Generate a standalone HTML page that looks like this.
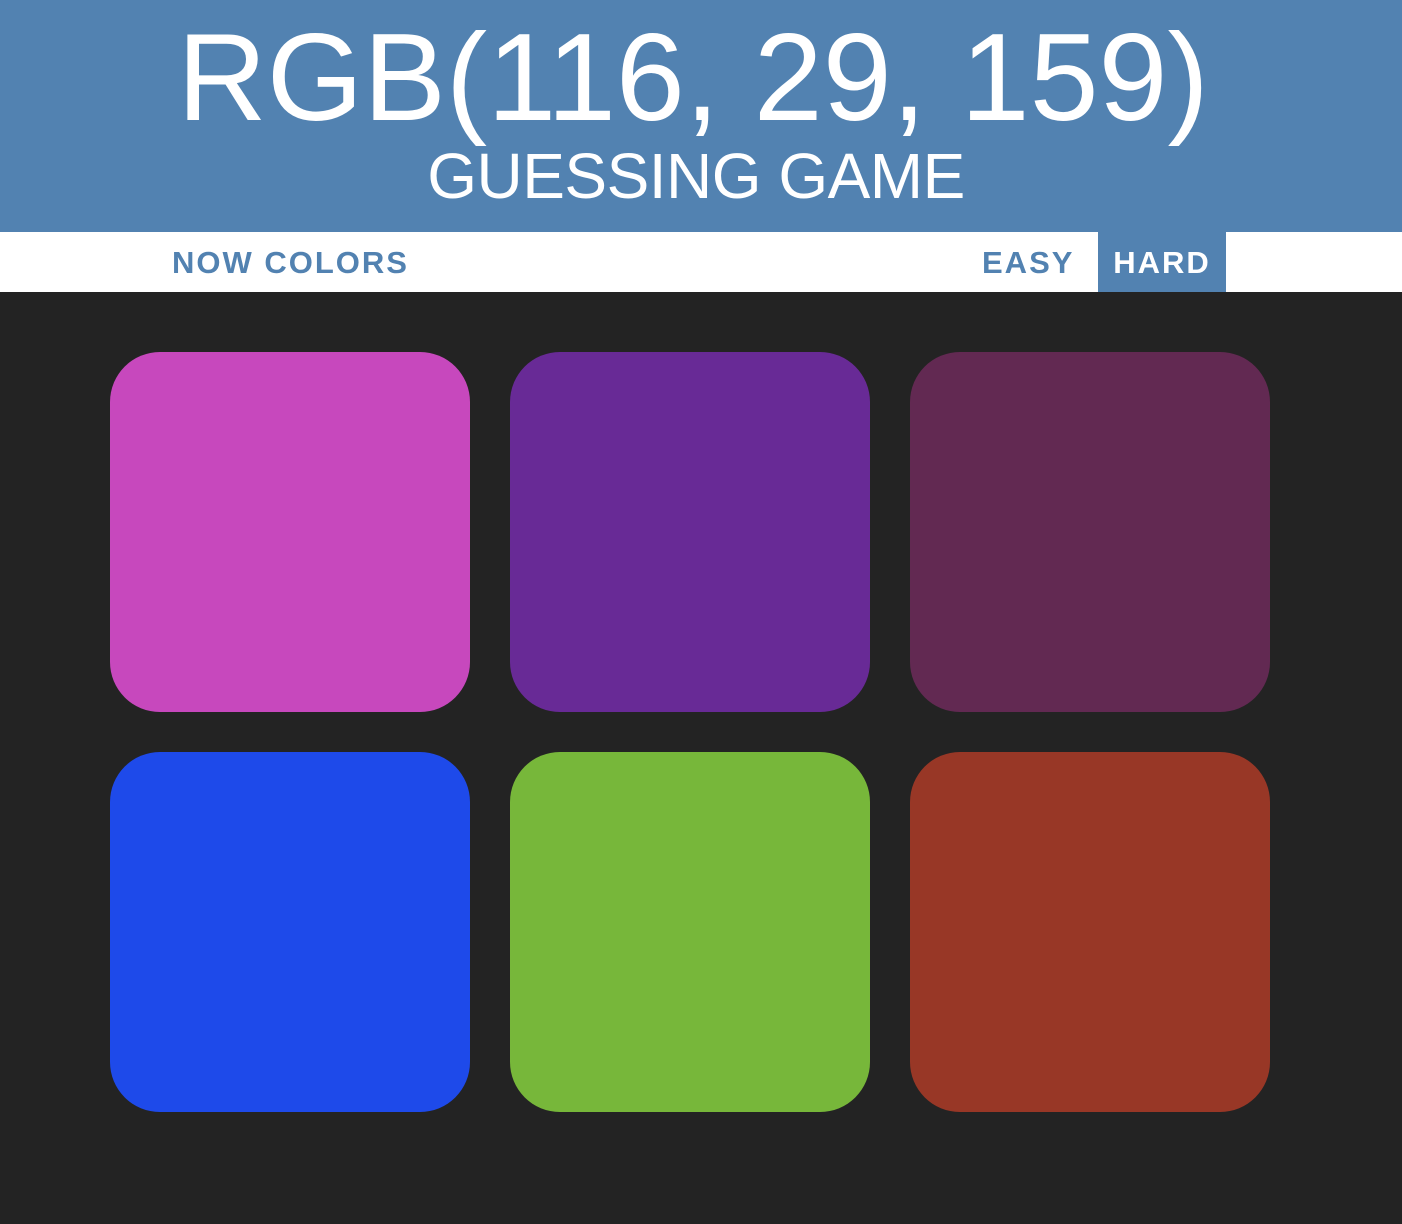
<!DOCTYPE html>
<html><head><style>
html,body{margin:0;padding:0;}
body{width:1402px;height:1224px;background:#232323;font-family:"Liberation Sans",sans-serif;overflow:hidden;position:relative;}
#hdr{position:absolute;left:0;top:0;width:1402px;height:232px;background:#5282b1;color:#fff;text-align:center;}
#big{position:absolute;left:-16px;right:0;top:8px;font-size:124px;line-height:140px;font-weight:300;letter-spacing:0px;}
#sub{position:absolute;left:-10px;right:0;top:140px;font-size:64px;line-height:72px;letter-spacing:-0.5px;}
#nav{position:absolute;left:0;top:232px;width:1402px;height:60px;background:#fff;}
.n{position:absolute;top:0;height:60px;line-height:62px;font-size:31px;font-weight:bold;letter-spacing:2px;color:#5282b1;}
.sq{position:absolute;width:360px;height:360px;border-radius:50px;}
</style></head><body>
<div id="hdr"><div id="big">RGB(116, 29, 159)</div><div id="sub">GUESSING GAME</div></div>
<div id="nav">
<div class="n" style="left:172px">NOW COLORS</div>
<div class="n" style="left:982px">EASY</div>
<div class="n" style="left:1098px;width:128px;background:#5282b1;color:#fff;text-align:center;letter-spacing:2px">HARD</div>
</div>
<div class="sq" style="left:110px;top:352px;background:#c748bd"></div>
<div class="sq" style="left:510px;top:352px;background:#682a96"></div>
<div class="sq" style="left:910px;top:352px;background:#622952"></div>
<div class="sq" style="left:110px;top:752px;background:#1e4aea"></div>
<div class="sq" style="left:510px;top:752px;background:#77b73a"></div>
<div class="sq" style="left:910px;top:752px;background:#983726"></div>
</body></html>
